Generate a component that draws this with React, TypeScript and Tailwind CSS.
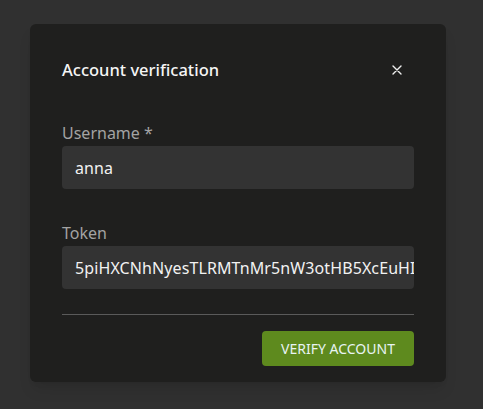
import React from 'react';

const Field = ({ label, value }: { label: string; value: string }) => (
    <div className="flex flex-col">
        <label className="text-[16px] leading-6 text-[#a3a3a3]">{label}</label>
        <div className="mt-px h-[43px] rounded bg-[#333333] pl-[13px] pr-[6px] flex items-center overflow-hidden">
            <span className="whitespace-nowrap text-[16px] tracking-[0.1px] text-[#f2f2f2]">{value}</span>
        </div>
    </div>
);

const App: React.FC = () => {
    return (
        <div
            className="min-h-screen w-full bg-[#303030] pt-6 pl-[30px]"
            style={{ fontFamily: '"Noto Sans", "Open Sans", sans-serif' }}
        >
            <div className="w-[416px] rounded-md bg-[#1f1f1e] px-8 pt-[34px] pb-4 shadow-lg">
                {/* Header */}
                <div className="flex items-center justify-between h-6">
                    <h2 className="text-[16.5px] font-medium text-[#f5f5f5]">Account verification</h2>
                    <button className="mr-[12px] text-[#eeeeee]">
                        <svg width="10" height="10" viewBox="0 0 10 10" stroke="currentColor" strokeWidth="1.4" strokeLinecap="round">
                            <path d="M1 1l8 8M9 1l-8 8" />
                        </svg>
                    </button>
                </div>

                {/* Fields */}
                <div className="mt-[39px] flex flex-col gap-8">
                    <Field label="Username *" value="anna" />
                    <Field label="Token" value="5piHXCNhNyesTLRMTnMr5nW3otHB5XcEuHI" />
                </div>

                <div className="mt-[25px] h-px bg-[#5a5a5a]" />

                {/* Actions */}
                <div className="mt-4 flex justify-end">
                    <button className="h-[35px] w-[152px] rounded bg-[#5e8a1e] text-[14px] text-[#e8f4f4]">
                        VERIFY ACCOUNT
                    </button>
                </div>
            </div>
        </div>
    );
};

export default App;
